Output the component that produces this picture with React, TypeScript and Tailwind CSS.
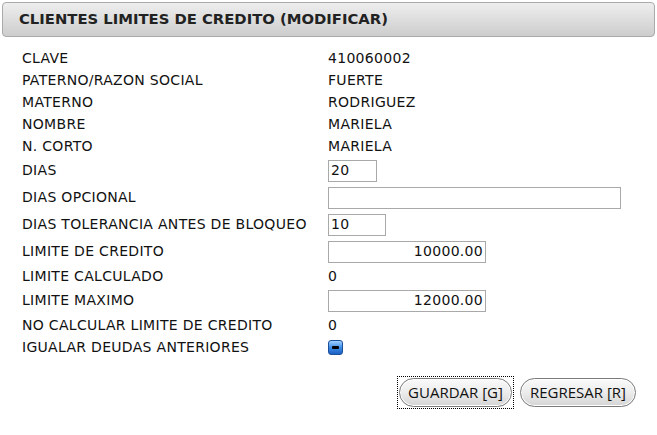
import React from "react";

const Text = ({ label, value }: { label: string; value: string }) => (
  <>
    <div className="h-[22px] flex items-center">{label}</div>
    <div className="h-[22px] flex items-center">{value}</div>
  </>
);

const Input = ({ label, value, w, right }: { label: string; value: string; w: string; right?: boolean }) => (
  <>
    <div className="h-[27px] flex items-center">{label}</div>
    <div className="h-[27px] flex items-center">
      <div
        className={`h-[22px] border border-[#a9a9a9] bg-white flex items-center px-[2px] ${w} ${right ? "justify-end" : ""}`}
      >
        {value}
      </div>
    </div>
  </>
);

export default function App() {
  return (
    <div className="w-[657px] h-[435px] bg-white text-[#111] pt-[2px] px-[2px]" style={{ fontFamily: "'DejaVu Sans', Verdana, sans-serif" }}>
      <div className="h-[35px] border border-[#aaaaaa] rounded-[4px] bg-gradient-to-b from-[#eeeeee] to-[#cdcdcd] flex items-center pl-[16px]">
        <span className="text-[14.8px] font-bold text-[#222]" style={{ fontFamily: "'DejaVu Sans', sans-serif" }}>
          CLIENTES LIMITES DE CREDITO (MODIFICAR)
        </span>
      </div>
      <div className="grid grid-cols-[306px_1fr] pl-[20px] mt-[10px] text-[14px] tracking-[0.3px]">
        <Text label="CLAVE" value="410060002" />
        <Text label="PATERNO/RAZON SOCIAL" value="FUERTE" />
        <Text label="MATERNO" value="RODRIGUEZ" />
        <Text label="NOMBRE" value="MARIELA" />
        <Text label="N. CORTO" value="MARIELA" />
        <Input label="DIAS" value="20" w="w-[49px]" />
        <Input label="DIAS OPCIONAL" value="" w="w-[293px]" />
        <Input label="DIAS TOLERANCIA ANTES DE BLOQUEO" value="10" w="w-[58px]" />
        <Input label="LIMITE DE CREDITO" value="10000.00" w="w-[158px]" right />
        <Text label="LIMITE CALCULADO" value="0" />
        <Input label="LIMITE MAXIMO" value="12000.00" w="w-[158px]" right />
        <Text label="NO CALCULAR LIMITE DE CREDITO" value="0" />
        <div className="h-[22px] flex items-center">IGUALAR DEUDAS ANTERIORES</div>
        <div className="h-[22px] flex items-center">
          <div className="w-[15px] h-[15px] rounded-[3px] border border-[#1d4f9a] bg-gradient-to-b from-[#9fd0ff] via-[#3d8ee8] to-[#1c5fc2] flex items-center justify-center">
            <div className="w-[7px] h-[3px] bg-black rounded-[1px]" />
          </div>
        </div>
      </div>
      <div className="flex justify-end gap-[4px] pr-[17px] mt-[18px]" style={{ fontFamily: "'Open Sans', 'Noto Sans', sans-serif" }}>
        <div className="border border-dotted border-black p-[1px]">
          <button className="h-[29px] w-[113px] rounded-full border border-[#7a7a7a] bg-gradient-to-b from-[#fafafa] via-[#ececec] to-[#d5d5d5] text-[15px] text-[#111] shadow-[inset_0_0_0_1px_#fff]">
            GUARDAR [G]
          </button>
        </div>
        <div className="p-[2px]">
          <button className="h-[29px] w-[116px] rounded-full border border-[#7a7a7a] bg-gradient-to-b from-[#fafafa] via-[#ececec] to-[#d5d5d5] text-[15px] text-[#111] shadow-[inset_0_0_0_1px_#fff]">
            REGRESAR [R]
          </button>
        </div>
      </div>
    </div>
  );
}
